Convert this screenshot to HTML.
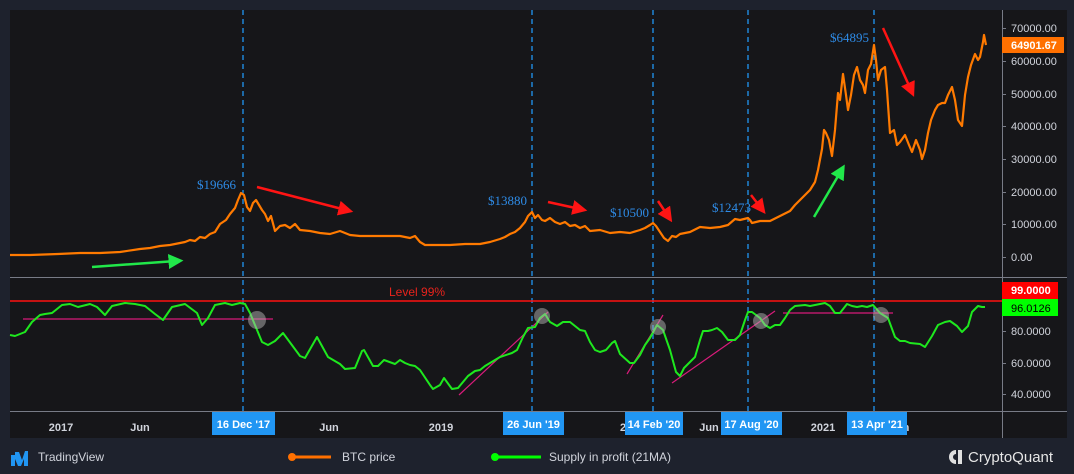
<!DOCTYPE html>
<html><head><meta charset="utf-8"><style>
html,body{margin:0;padding:0;background:#1e222d;width:1074px;height:474px;overflow:hidden;font-family:"Liberation Sans",sans-serif}
svg{position:absolute;left:0;top:0}
</style></head><body>
<svg width="1074" height="474" viewBox="0 0 1074 474" xmlns="http://www.w3.org/2000/svg" font-family="Liberation Sans, sans-serif">
<rect x="0" y="0" width="1074" height="474" fill="#1e222d"/>
<rect x="10" y="10" width="1057" height="428" fill="#161619"/>
<line x1="10" y1="277.5" x2="1067" y2="277.5" stroke="#787b86" stroke-width="1"/>
<line x1="10" y1="411.5" x2="1067" y2="411.5" stroke="#787b86" stroke-width="1"/>
<line x1="1002.5" y1="10" x2="1002.5" y2="438" stroke="#787b86" stroke-width="1"/>
<g stroke="#2196f3" stroke-width="1.3" stroke-dasharray="5,4">
<line x1="243" y1="10" x2="243" y2="412"/>
<line x1="532" y1="10" x2="532" y2="412"/>
<line x1="653" y1="10" x2="653" y2="412"/>
<line x1="748" y1="10" x2="748" y2="412"/>
<line x1="874" y1="10" x2="874" y2="412"/>
</g>
<polyline fill="none" stroke="#ff7a00" stroke-width="2.2" stroke-linejoin="round" points="10,255 30,255 58,254 80,253 100,253 120,252 140,249 150,248 160,246 170,245 180,243 185,242 190,240 195,241 200,237 205,238 210,234 215,232 220,224 226,220 230,214 235,208 238,200 241,193 244,195 247,207 250,211 253,203 256,200 259,205 262,210 265,214 268,221 271,216 275,231 280,226 285,225 290,228 295,224 300,230 310,231 320,233 330,234 340,231 350,235 360,236 380,236 400,236 410,238 415,236 420,242 425,245 435,245 450,245 465,244 480,244 490,242 500,239 505,237 510,234 515,232 520,228 525,222 528,216 532,212 535,218 538,215 542,220 545,221 550,218 555,222 560,224 565,222 570,226 575,225 580,228 585,226 590,231 600,230 610,233 620,232 630,233 640,230 645,228 650,225 653,223 656,226 660,232 664,238 668,241 672,236 676,237 680,234 690,232 700,227 710,228 720,227 728,225 735,219 740,220 748,218 750,220 752,223 760,221 770,221 780,216 790,211 795,205 800,200 805,195 810,190 815,182 818,170 822,149 824,130 826,133 829,140 832,156 835,130 838,93 840,100 843,74 846,95 848,110 851,95 854,75 857,67 860,80 863,85 865,93 868,70 871,64 874,45 876,60 878,80 881,70 885,67 887,90 890,133 894,130 897,145 900,142 905,135 909,145 912,152 916,140 920,150 922,159 925,150 928,133 931,120 935,110 938,105 942,103 945,103 948,95 952,87 955,100 958,120 962,126 965,95 968,77 971,65 975,54 978,60 980,57 983,42 984,35 986,45"/>
<line x1="10" y1="301" x2="1002" y2="301" stroke="#ff1010" stroke-width="1.5"/>
<text x="389" y="296" fill="#e8231c" font-size="12">Level 99%</text>
<g stroke="#d81b7a" stroke-width="1.2">
<line x1="23" y1="319" x2="273" y2="319"/>
<line x1="459" y1="395" x2="548" y2="312"/>
<line x1="627" y1="374" x2="663" y2="315"/>
<line x1="672" y1="383" x2="775" y2="311"/>
<line x1="783" y1="313" x2="893" y2="313"/>
</g>
<polyline fill="none" stroke="#1ee81e" stroke-width="2" stroke-linejoin="round" points="10,335 15,336 25,332 32,322 40,315 45,314 52,313 62,305 70,304 78,307 90,304 97,307 105,315 112,306 125,303 135,304 145,306 155,314 163,320 172,307 185,304 197,313 202,325 208,318 215,305 225,303 232,305 240,303 245,304 250,313 262,342 268,345 275,341 283,333 300,356 305,358 317,337 328,357 340,364 345,369 355,368 362,351 364,350 373,366 378,366 384,360 395,364 400,360 405,363 410,365 415,366 420,370 430,385 433,389 440,385 444,378 452,389 458,388 468,376 475,371 480,370 485,366 490,363 495,360 500,357 512,353 517,350 523,337 528,328 535,327 540,318 545,314 550,322 557,326 563,322 570,322 580,330 585,331 590,342 595,350 600,352 606,350 612,343 615,341 620,354 630,363 634,363 640,355 645,345 650,338 657,325 663,330 670,350 676,372 680,376 684,368 690,362 695,357 700,340 703,331 708,331 712,330 717,328 722,332 728,340 735,340 740,335 745,320 748,312 752,312 760,318 765,325 770,328 775,325 780,325 785,318 790,310 795,306 805,305 810,306 815,305 820,304 825,303 830,306 835,313 840,313 847,304 852,306 857,307 862,306 867,307 873,305 880,313 888,318 895,337 900,341 905,341 910,343 920,344 925,347 932,336 938,325 945,322 950,321 957,326 962,332 968,326 972,312 978,306 982,307 985,307"/>
<g fill="#b4b4b4" fill-opacity="0.5">
<circle cx="257" cy="320" r="9"/>
<circle cx="542" cy="316" r="8"/>
<circle cx="658" cy="327" r="8"/>
<circle cx="761" cy="321" r="8"/>
<circle cx="881" cy="315" r="8"/>
</g>
<g fill="#2e8be6" font-family="Liberation Serif, serif" font-size="13">
<text x="197" y="189">$19666</text>
<text x="488" y="205">$13880</text>
<text x="610" y="217">$10500</text>
<text x="712" y="212">$12473</text>
<text x="830" y="42">$64895</text>
</g>
<defs>
<marker id="ar" markerWidth="6" markerHeight="6" refX="3" refY="3" orient="auto" markerUnits="strokeWidth"><path d="M0,0 L6,3 L0,6 Z" fill="#ff1414"/></marker>
<marker id="ag" markerWidth="6" markerHeight="6" refX="3" refY="3" orient="auto" markerUnits="strokeWidth"><path d="M0,0 L6,3 L0,6 Z" fill="#21e84a"/></marker>
</defs>
<g stroke="#ff1414" stroke-width="2.5" marker-end="url(#ar)">
<line x1="257" y1="187" x2="346" y2="210"/>
<line x1="548" y1="202" x2="580" y2="209"/>
<line x1="658" y1="201" x2="668" y2="216"/>
<line x1="751" y1="195" x2="761" y2="208"/>
<line x1="883" y1="28" x2="911" y2="90"/>
</g>
<g stroke="#21e84a" stroke-width="2.5" marker-end="url(#ag)">
<line x1="92" y1="267" x2="176" y2="261"/>
<line x1="814" y1="217" x2="841" y2="171"/>
</g>
<g fill="#d1d4dc" font-size="11">
<text x="1011" y="32">70000.00</text>
<text x="1011" y="65">60000.00</text>
<text x="1011" y="98">50000.00</text>
<text x="1011" y="130">40000.00</text>
<text x="1011" y="163">30000.00</text>
<text x="1011" y="196">20000.00</text>
<text x="1011" y="228">10000.00</text>
<text x="1011" y="261">0.00</text>
<text x="1011" y="335">80.0000</text>
<text x="1011" y="367">60.0000</text>
<text x="1011" y="398">40.0000</text>
</g>
<g stroke="#787b86" stroke-width="1">
<line x1="1002" y1="28.5" x2="1006" y2="28.5"/><line x1="1002" y1="61.5" x2="1006" y2="61.5"/><line x1="1002" y1="94.5" x2="1006" y2="94.5"/><line x1="1002" y1="126.5" x2="1006" y2="126.5"/><line x1="1002" y1="159.5" x2="1006" y2="159.5"/><line x1="1002" y1="192.5" x2="1006" y2="192.5"/><line x1="1002" y1="224.5" x2="1006" y2="224.5"/><line x1="1002" y1="257.5" x2="1006" y2="257.5"/><line x1="1002" y1="331.5" x2="1006" y2="331.5"/><line x1="1002" y1="363.5" x2="1006" y2="363.5"/><line x1="1002" y1="394.5" x2="1006" y2="394.5"/>
</g>
<rect x="1002" y="37" width="62" height="16" fill="#ff7000"/>
<text x="1011" y="49" fill="#ffffff" font-size="11" font-weight="bold">64901.67</text>
<rect x="1002" y="282" width="56" height="17" fill="#ff0000"/>
<text x="1011" y="294" fill="#ffffff" font-size="11" font-weight="bold">99.0000</text>
<rect x="1002" y="299" width="56" height="17" fill="#00ff00"/>
<text x="1011" y="312" fill="#000000" font-size="11">96.0126</text>
<g fill="#d1d4dc" font-size="11" font-weight="bold" text-anchor="middle">
<text x="61" y="431">2017</text>
<text x="140" y="431">Jun</text>
<text x="329" y="431">Jun</text>
<text x="441" y="431">2019</text>
<text x="623" y="431">2</text>
<text x="709" y="431">Jun</text>
<text x="823" y="431">2021</text>
<text x="906" y="431">n</text>
</g>
<g fill="#2196f3">
<rect x="212" y="412" width="63" height="23"/>
<rect x="503" y="412" width="61" height="23"/>
<rect x="625" y="412" width="58" height="23"/>
<rect x="721" y="412" width="61" height="23"/>
<rect x="847" y="412" width="60" height="23"/>
</g>
<g fill="#ffffff" font-size="11" font-weight="bold" text-anchor="middle">
<text x="243.5" y="428">16 Dec '17</text>
<text x="533.5" y="428">26 Jun '19</text>
<text x="654" y="428">14 Feb '20</text>
<text x="751.5" y="428">17 Aug '20</text>
<text x="877" y="428">13 Apr '21</text>
</g>
<path d="M11,466 L11,455 L15,455 L15,452 L19,452 L22,460 L25,451 L28,451 L28,466 L24,466 L24,459 L21,466 L18,466 L15,459 L15,466Z" fill="#2196f3"/>
<text x="38" y="461" fill="#d1d4dc" font-size="12">TradingView</text>
<circle cx="292" cy="457" r="4" fill="#ff7000"/>
<line x1="292" y1="457" x2="331" y2="457" stroke="#ff7000" stroke-width="3"/>
<text x="342" y="461" fill="#d1d4dc" font-size="12">BTC price</text>
<circle cx="495" cy="457" r="4" fill="#00ff00"/>
<line x1="495" y1="457" x2="541" y2="457" stroke="#00ff00" stroke-width="3"/>
<text x="549" y="461" fill="#d1d4dc" font-size="12">Supply in profit (21MA)</text>
<path d="M956,450 A7,7 0 1 0 956,464 L956,460 A3,3 0 1 1 956,454 Z" fill="#e0e0e0"/>
<path d="M958,450 L962,450 L962,464 L958,464 Z" fill="#e0e0e0"/>
<text x="968" y="462" fill="#e6e6e6" font-size="15">CryptoQuant</text>
</svg>
</body></html>
